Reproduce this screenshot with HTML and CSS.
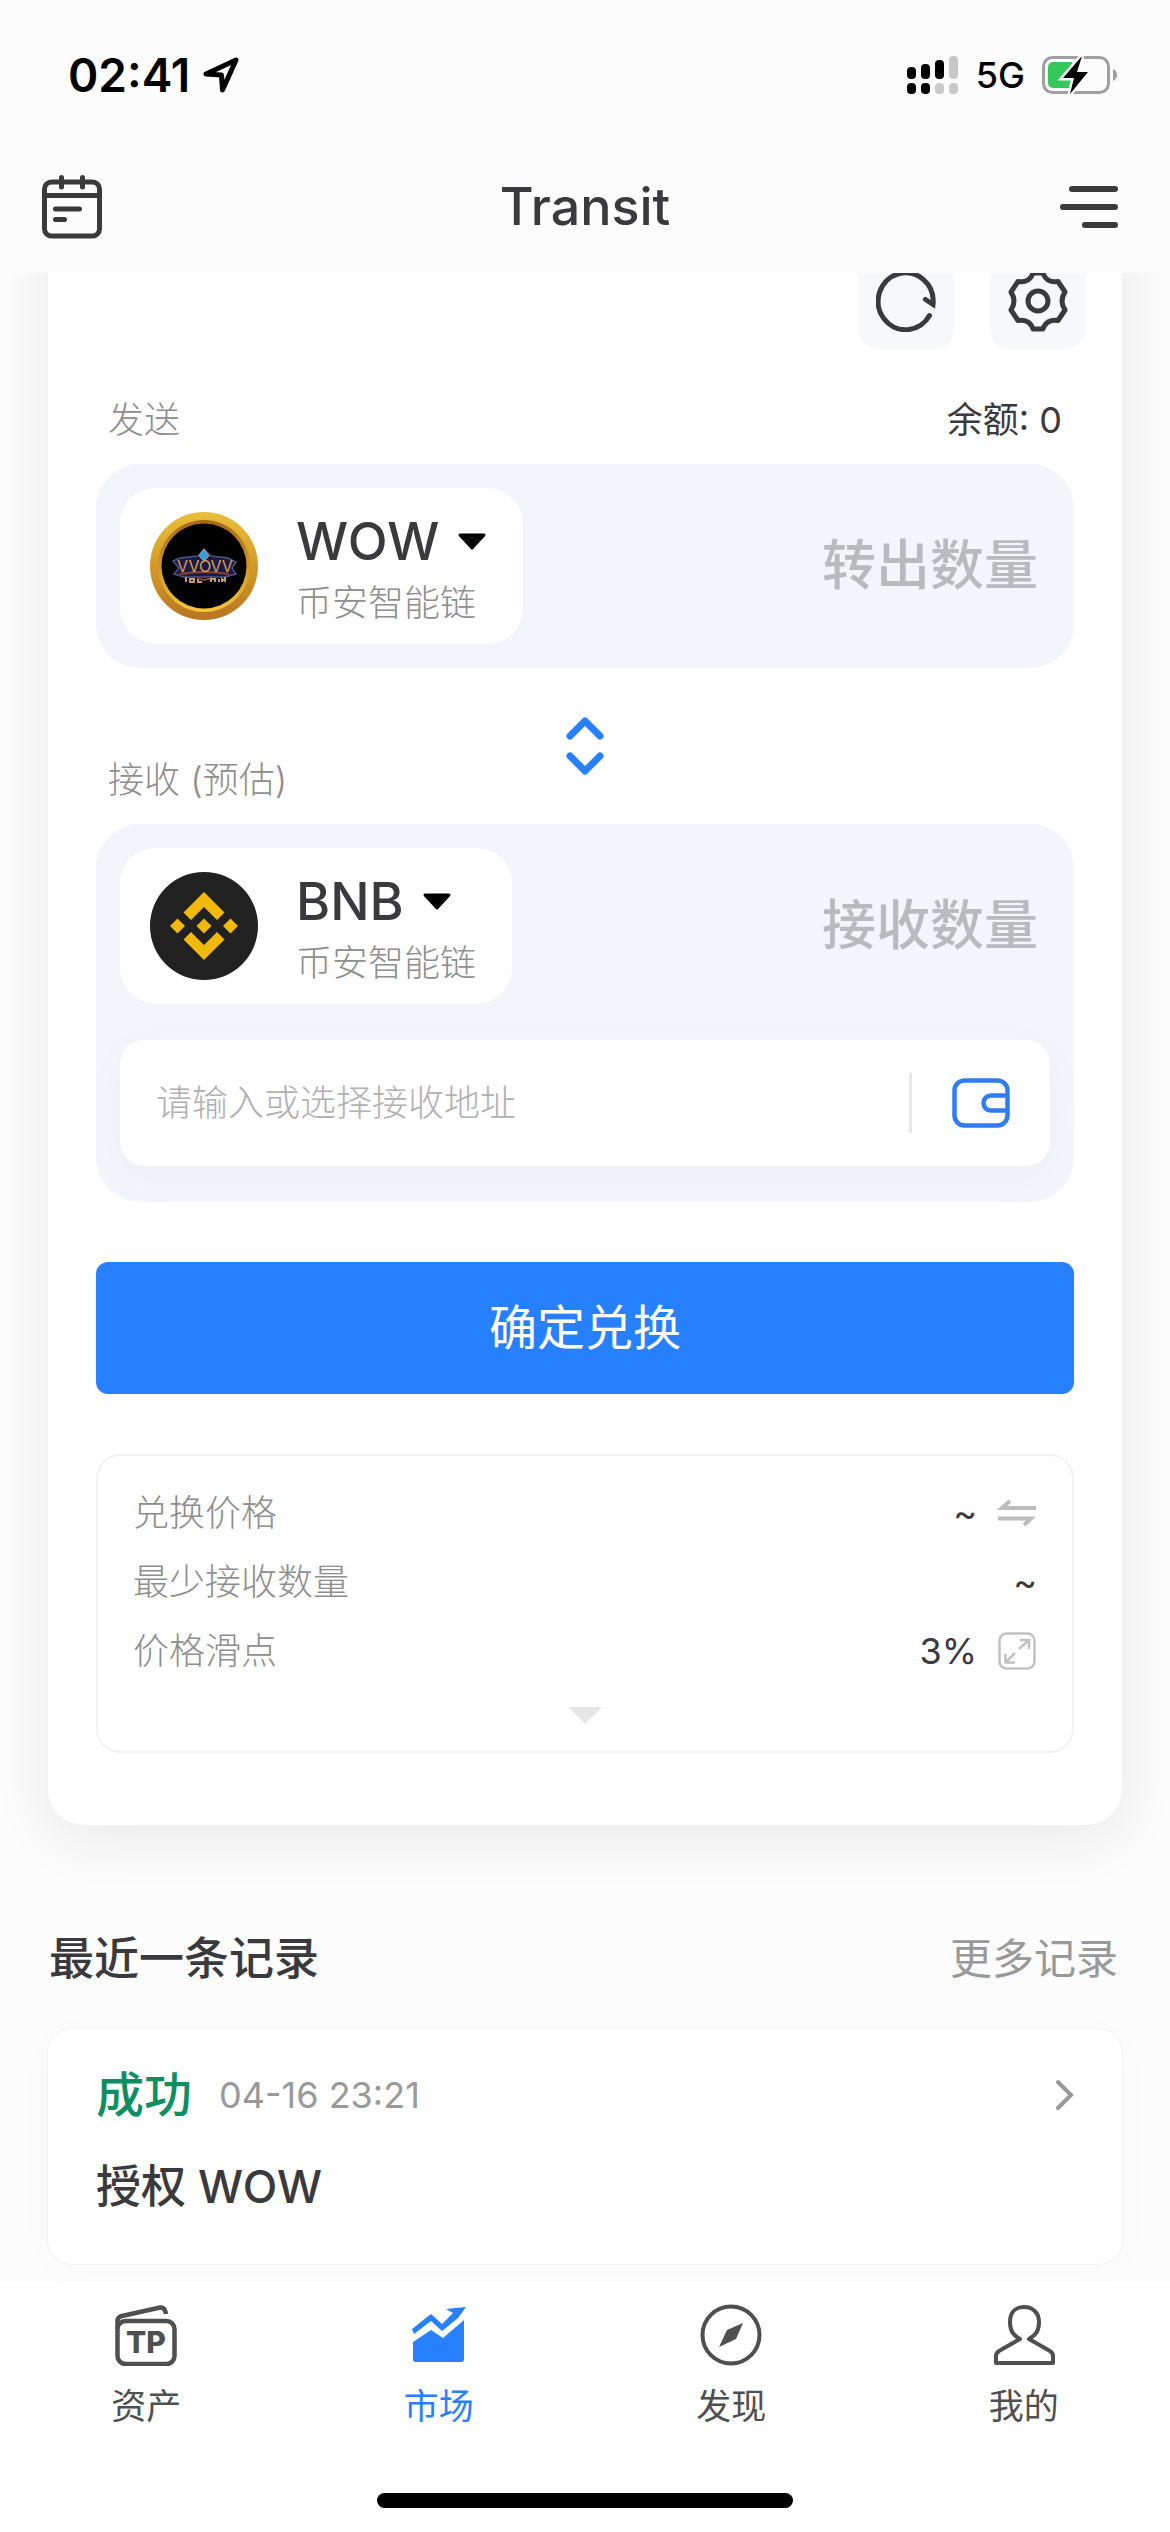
FILE: index.html
```html
<!DOCTYPE html>
<html lang="zh-CN">
<head>
    <meta charset="UTF-8">
    <meta name="viewport" content="width=device-width, initial-scale=1.0">
    <title>Transit</title>
    <link rel="stylesheet" href="styles.css">
</head>
<body>

    <div class="status-bar">
        <div class="status-left">
            <span class="time">02:41</span>
            <svg width="38" height="38" viewBox="0 0 38 38" fill="none" stroke="#000" stroke-width="5" stroke-linejoin="round">
                <path d="M34 4 L4 18 L19.500 19 L20.500 34 Z"/>
            </svg>
        </div>
        <div class="status-right">
            <svg width="52" height="38" viewBox="0 0 52 38">
                <g fill="#000">
                    <rect x="0" y="11" width="9" height="12" rx="4"/>
                    <rect x="14" y="8" width="9" height="15" rx="4"/>
                    <rect x="28" y="4" width="9" height="19" rx="4"/>
                    <rect x="0" y="27" width="9" height="11" rx="4"/>
                    <rect x="14" y="27" width="9" height="11" rx="4"/>
                </g>
                <g fill="#c8c8c8">
                    <rect x="42" y="0" width="9" height="23" rx="4"/>
                    <rect x="28" y="27" width="9" height="11" rx="4"/>
                    <rect x="42" y="27" width="9" height="11" rx="4"/>
                </g>
            </svg>
            <span class="network">5G</span>
            <svg width="76" height="40" viewBox="0 0 76 40">
                <rect x="1.500" y="2.500" width="65" height="35" rx="9" fill="none" stroke="#a0a0a0" stroke-width="3"/>
                <path d="M71 14 Q75 16 75 20 Q75 24 71 26 Z" fill="#a0a0a0"/>
                <rect x="6" y="7" width="27" height="26" rx="5" fill="#34c759"/>
                <path d="M40 1 L21 23 L32 23 L28 39 L46 17 L35 17 Z" fill="#000" stroke="#fcfcfc" stroke-width="5" paint-order="stroke"/>
            </svg>
        </div>
    </div>

    <header class="header">
        <button class="icon-btn" aria-label="记录">
            <svg width="60" height="64" viewBox="0 0 60 64" fill="none" stroke="#3a3a3a" stroke-width="5" stroke-linecap="round">
                <rect x="2.500" y="7" width="55" height="54" rx="7"/>
                <path d="M3 20.500 H57 M19.500 2.500 V12 M40.500 2.500 V12 M13.500 34 H37.500 M13.500 44.500 H22.500"/>
            </svg>
        </button>
        <h1>Transit</h1>
        <button class="icon-btn" aria-label="菜单">
            <svg width="60" height="44" viewBox="0 0 60 44" fill="none" stroke="#3a3a3a" stroke-width="6" stroke-linecap="round">
                <path d="M12 4 H55 M3 22 H55 M25 40 H55"/>
            </svg>
        </button>
    </header>

    <main class="content">
        <section class="panel">
            <div class="tools">
                <button class="tool" aria-label="刷新">
                    <svg width="60" height="62" viewBox="0 0 60 62" fill="none" stroke="#3a3a3c" stroke-width="5" stroke-linecap="round">
                        <path d="M53.500 45.500 A27.500 28.500 0 1 1 57 34.500 L49.500 29.500"/>
                    </svg>
                </button>
                <button class="tool" aria-label="设置">
                    <svg width="60" height="62" viewBox="0 0 60 62" fill="none" stroke="#3a3a3c" stroke-width="5" stroke-linejoin="round">
                        <path d="M25 3 H35 C37 9 42 13 50 11.500 L57 22 C53 28 53 34 57 40 L50 50.500 C42 49 37 53 35 59 H25 C23 53 18 49 10 50.500 L3 40 C7 34 7 28 3 22 L10 11.500 C18 13 23 9 25 3 Z"/>
                        <circle cx="30" cy="31" r="10"/>
                    </svg>
                </button>
            </div>

            <div class="field-head">
                <label for="sendAmount">发送</label>
                <span class="balance">余额: 0</span>
            </div>
            <div class="box">
                <div class="token-row">
                    <button class="token">
                        <svg class="coin" width="108" height="108" viewBox="0 0 108 108">
                            <defs>
                                <linearGradient id="gold" x1="0" y1="0" x2="0" y2="1">
                                    <stop offset="0" stop-color="#eabf3a"/>
                                    <stop offset="0.5" stop-color="#d39b28"/>
                                    <stop offset="1" stop-color="#b97423"/>
                                </linearGradient>
                                <linearGradient id="rim" x1="0" y1="0" x2="0" y2="1">
                                    <stop offset="0" stop-color="#a8671a"/>
                                    <stop offset="1" stop-color="#f4c53c"/>
                                </linearGradient>
                            </defs>
                            <circle cx="54" cy="54" r="54" fill="url(#gold)"/>
                            <circle cx="54" cy="54" r="46" fill="url(#rim)"/>
                            <circle cx="54" cy="54" r="42.500" fill="#000"/>
                            <path d="M23 49 L30 46 L48 44 L54 37 L61 44 L78 46 L86 50 L82 56 L86 62 L75 65 H34 L24 62 L29 56 Z" fill="#1c1b42" stroke="#4b5685" stroke-width="1.500"/>
                            <path d="M30 62 Q54 58 79 62 M47 65 Q54 71 62 65" fill="none" stroke="#8a4430" stroke-width="2"/>
                            <path d="M54 37 L59 44 L54 49 L49 44 Z" fill="#2e9ee8" stroke="#c99461" stroke-width="1"/>
                            <text x="55" y="60" text-anchor="middle" font-size="16" fill="#d99c5e">VVOVV</text>
                            <path d="M36 65 V70 M40 67 H44 V70 H40 Z M48 67 V70 H52 M61 70 V67 H65 V70 M69 67 V70 M72 70 V67 L75 69 V65" fill="none" stroke="#c49a6a" stroke-width="2"/>
                        </svg>
                        <span class="token-text">
                            <span class="token-name">WOW
                                <svg width="30" height="18" viewBox="0 0 30 18"><path d="M3 2 H27 L15 15 Z" fill="#000" stroke="#000" stroke-width="3" stroke-linejoin="round"/></svg>
                            </span>
                            <span class="token-chain">币安智能链</span>
                        </span>
                    </button>
                    <input class="amount" type="text" id="sendAmount" placeholder="转出数量">
                </div>
            </div>

            <div class="field-head swap-head">
                <label for="receiveAmount">接收 (预估)</label>
                <button class="swap" aria-label="切换">
                    <svg width="38" height="58" viewBox="0 0 38 58" fill="none" stroke="#2780fe" stroke-width="7" stroke-linecap="round" stroke-linejoin="round">
                        <path d="M4 19 L19 4 L34 19 M4 39 L19 54 L34 39"/>
                    </svg>
                </button>
            </div>
            <div class="box">
                <div class="token-row">
                    <button class="token">
                        <svg class="coin" width="108" height="108" viewBox="0 0 108 108">
                            <circle cx="54" cy="54" r="54" fill="#212121"/>
                            <g fill="#f0b90b">
                                <path d="M54 20 L74.500 40.500 L67 48 L54 35 L41 48 L33.500 40.500 Z"/>
                                <path d="M54 88 L74.500 67.500 L67 60 L54 73 L41 60 L33.500 67.500 Z"/>
                                <path d="M54 46.500 L61.500 54 L54 61.500 L46.500 54 Z"/>
                                <path d="M27.500 46.500 L35 54 L27.500 61.500 L20 54 Z"/>
                                <path d="M80.500 46.500 L88 54 L80.500 61.500 L73 54 Z"/>
                            </g>
                        </svg>
                        <span class="token-text">
                            <span class="token-name">BNB
                                <svg width="30" height="18" viewBox="0 0 30 18"><path d="M3 2 H27 L15 15 Z" fill="#000" stroke="#000" stroke-width="3" stroke-linejoin="round"/></svg>
                            </span>
                            <span class="token-chain">币安智能链</span>
                        </span>
                    </button>
                    <input class="amount" type="text" id="receiveAmount" placeholder="接收数量">
                </div>
                <div class="address">
                    <input type="text" id="address" aria-label="接收地址" placeholder="请输入或选择接收地址">
                    <button class="wallet" aria-label="选择钱包">
                        <svg width="58" height="50" viewBox="0 0 58 50" fill="none" stroke="#2f7df0" stroke-width="4.500">
                            <rect x="2.500" y="2.500" width="53" height="45" rx="10"/>
                            <path d="M55 17.500 H39 A7.500 7.500 0 0 0 39 32.500 H55"/>
                        </svg>
                    </button>
                </div>
            </div>

            <button class="confirm">确定兑换</button>

            <div class="details">
                <dl>
                    <div class="row">
                        <dt>兑换价格</dt>
                        <dd>~
                            <svg width="40" height="28" viewBox="0 0 40 28" fill="none" stroke="#bcbcbc" stroke-width="4">
                                <path d="M39 9 H5 L13 2 M1 19.500 H34 L27 26"/>
                            </svg>
                        </dd>
                    </div>
                    <div class="row">
                        <dt>最少接收数量</dt>
                        <dd>~</dd>
                    </div>
                    <div class="row">
                        <dt>价格滑点</dt>
                        <dd>3%
                            <svg width="40" height="38" viewBox="0 0 40 38" fill="none" stroke="#c2c2c2" stroke-width="2.500">
                                <rect x="2.500" y="1.500" width="35" height="35" rx="7"/>
                                <path d="M22 17 L32 8 M23 8 H32 V17 M18 21 L8.500 30.500 M8.500 22 V30.500 H18"/>
                            </svg>
                        </dd>
                    </div>
                </dl>
                <button class="expand" aria-label="展开">
                    <svg width="34" height="17" viewBox="0 0 34 17"><path d="M0 0 H34 L17 17 Z" fill="#e6e6e6"/></svg>
                </button>
            </div>
        </section>

        <section class="records">
            <div class="records-head">
                <h2>最近一条记录</h2>
                <a href="#">更多记录</a>
            </div>
            <a class="record" href="#">
                <span class="record-top">
                    <span class="state">成功</span>
                    <span class="date">04-16 23:21</span>
                    <svg width="20" height="32" viewBox="0 0 20 32" fill="none" stroke="#999" stroke-width="4" stroke-linecap="round">
                        <path d="M4 3 L17 16 L4 29"/>
                    </svg>
                </span>
                <span class="record-name">授权 WOW</span>
            </a>
        </section>
    </main>

    <nav class="tab-bar">
        <div class="tabs">
            <a href="#">
                <svg width="62" height="62" viewBox="0 0 62 62" fill="none" stroke="#4f4f4f" stroke-width="4.500">
                    <rect x="2.500" y="17" width="57" height="43" rx="8"/>
                    <path d="M2.500 25 V16 Q3 13 7 12 L45 3.500 Q50 3 51 10"/>
                    <text x="31" y="49" text-anchor="middle" font-size="30" font-weight="800" fill="#4f4f4f" stroke="none">TP</text>
                </svg>
                资产
            </a>
            <a href="#" class="active">
                <svg width="62" height="62" viewBox="0 0 62 62" fill="#2780fe">
                    <path d="M5 38 L23 26 L35 34 L56 16 V55 Q56 58 53 58 H8 Q5 58 5 55 Z"/>
                    <path d="M4 25 L23 10 L34 20 L45 9 L38 5 L58 3 L50 14 L34 27 L23 17 L6 30 Z"/>
                </svg>
                市场
            </a>
            <a href="#">
                <svg width="62" height="62" viewBox="0 0 62 62" fill="none" stroke="#4f4f4f" stroke-width="4">
                    <circle cx="31" cy="31" r="28.500"/>
                    <path d="M43 19 L36 35 L19 43 L27 26 Z" fill="#4f4f4f" stroke="none"/>
                </svg>
                发现
            </a>
            <a href="#">
                <svg width="62" height="62" viewBox="0 0 62 62" fill="none" stroke="#4f4f4f" stroke-width="4" stroke-linejoin="round">
                    <path d="M27 35 C20 31 17 27 17 18 C17 8 23 3 31 3 C39 3 46 8 46 18 C46 27 43 31 36 35 L57 47 Q60 49 60 52 V59 H3 V52 Q3 49 6 47 Z"/>
                </svg>
                我的
            </a>
        </div>
        <div class="home-indicator"></div>
    </nav>

</body>
</html>
```

FILE: styles.css
```css
* {
    box-sizing: border-box;
}
body {
    margin: 0;
    min-height: 100vh;
    display: flex;
    flex-direction: column;
    background-color: #fcfcfc;
    color: #3a3a3c;
    font-family: Inter, "Noto Sans CJK SC", sans-serif;
    font-size: 36px;
    line-height: 52px;
}
button, input {
    font: inherit;
    color: inherit;
    border: none;
    background: none;
    padding: 0;
    margin: 0;
}
button {
    cursor: pointer;
}
input {
    outline: none;
    min-width: 0;
}
a {
    color: inherit;
    text-decoration: none;
}
svg {
    display: block;
    flex: none;
}

/* status bar */
.status-bar {
    height: 149px;
    padding: 0 52px 0 68px;
    display: flex;
    align-items: center;
    justify-content: space-between;
    color: #000;
}
.status-left, .status-right {
    display: flex;
    align-items: center;
}
.status-left {
    gap: 12px;
}
.status-right {
    gap: 17px;
}
.time {
    font-size: 46px;
    font-weight: 600;
}
.network {
    font-size: 36px;
    font-weight: 500;
}

/* header */
.header {
    height: 124px;
    padding: 0 42px 8px;
    display: flex;
    align-items: center;
    justify-content: space-between;
}
.header h1 {
    margin: 0;
    font-size: 52px;
    font-weight: 500;
}
.icon-btn {
    width: 68px;
}

/* scrolled content */
.content {
    flex: 1;
    overflow: hidden;
    padding: 0 48px;
}
.panel {
    margin-top: -68px;
    padding: 48px 36px 72px;
    background-color: #fff;
    border-radius: 36px;
    box-shadow: 0 12px 60px rgba(0, 0, 0, 0.08);
}
.tools {
    display: flex;
    justify-content: flex-end;
    gap: 36px;
    margin-bottom: 45px;
}
.tool {
    width: 96px;
    height: 96px;
    display: flex;
    align-items: center;
    justify-content: center;
    background-color: #f7f8fa;
    border-radius: 20px;
}
.field-head {
    display: flex;
    justify-content: space-between;
    padding: 0 24px 18px;
}
.field-head label {
    color: #8e8e8e;
    font-weight: 300;
}
.swap-head {
    display: grid;
    grid-template-columns: 1fr auto 1fr;
    height: 156px;
    padding: 0 24px;
}
.swap-head label {
    align-self: end;
    margin-bottom: 18px;
}
.swap {
    align-self: center;
}
.box {
    margin: 0 12px;
    padding: 24px;
    background-color: #f4f5fb;
    border-radius: 44px;
}
.token-row {
    display: flex;
    align-items: center;
}
.token {
    display: flex;
    align-items: center;
    gap: 38px;
    height: 156px;
    padding: 0 36px 0 30px;
    background-color: #fff;
    border-radius: 36px;
    text-align: left;
}
.token-text {
    display: flex;
    flex-direction: column;
    gap: 3px;
    padding-top: 6px;
}
.token-name {
    display: flex;
    align-items: center;
    gap: 18px;
    font-size: 52px;
    line-height: 64px;
    font-weight: 500;
}
.token-chain {
    color: #8e8e8e;
    font-weight: 300;
}
.amount {
    flex: 1;
    padding-right: 12px;
    font-size: 54px;
    font-weight: 500;
    line-height: 80px;
    text-align: right;
}
.amount::placeholder {
    color: #b9babd;
    opacity: 1;
}
.address {
    display: flex;
    align-items: center;
    height: 126px;
    margin: 36px 0 12px;
    padding: 0 0 0 36px;
    background-color: #fff;
    border-radius: 24px;
    box-shadow: 0 12px 48px rgba(0, 0, 0, 0.03);
}
.address input {
    flex: 1;
    font-weight: 300;
}
.address input::placeholder {
    color: #b0b0b2;
    opacity: 1;
}
.wallet {
    height: 60px;
    display: flex;
    align-items: center;
    padding: 0 40px;
    border-left: 3px solid #e8e8e8;
}
.confirm {
    display: block;
    width: calc(100% - 24px);
    height: 132px;
    margin: 60px 12px;
    background-color: #2780fe;
    border-radius: 12px;
    color: #fff;
    font-size: 48px;
}
.details {
    margin: 0 12px;
    padding: 22px 35px 6px;
    border: 2px solid #f2f2f2;
    border-radius: 24px;
}
.details dl {
    margin: 0;
}
.row {
    display: flex;
    align-items: center;
    justify-content: space-between;
    height: 69px;
}
.row dt {
    color: #8e8e8e;
    font-weight: 300;
}
.row dd {
    margin: 0;
    display: flex;
    align-items: center;
    gap: 20px;
}
.expand {
    display: flex;
    align-items: center;
    justify-content: center;
    width: 100%;
    height: 60px;
}

/* records */
.records-head {
    display: flex;
    justify-content: space-between;
    padding: 100px 4px 36px 1px;
    line-height: 68px;
}
.records-head h2 {
    margin: 0;
    font-size: 45px;
    font-weight: 500;
}
.records-head a {
    color: #999;
    font-size: 42px;
}
.record {
    display: flex;
    flex-direction: column;
    gap: 24px;
    padding: 32px 48px 43px;
    background-color: #fff;
    border-radius: 24px;
    box-shadow: 0 0 3px rgba(0, 0, 0, 0.08), 0 6px 48px rgba(0, 0, 0, 0.02);
    line-height: 68px;
}
.record-top {
    display: flex;
    align-items: center;
    gap: 27px;
}
.state {
    color: #0f8e62;
    font-size: 48px;
    font-weight: 500;
}
.date {
    flex: 1;
    color: #999;
}
.record-name {
    font-size: 45px;
    font-weight: 500;
}

/* bottom tabs */
.tab-bar {
    background-color: #fff;
    padding: 22px 0 24px;
}
.tabs {
    display: grid;
    grid-template-columns: repeat(4, 1fr);
    margin-bottom: 61px;
}
.tabs a {
    display: flex;
    flex-direction: column;
    align-items: center;
    gap: 14px;
    color: #4f4f4f;
    font-size: 35px;
}
.tabs .active {
    color: #2780fe;
}
.home-indicator {
    width: 416px;
    height: 15px;
    margin: 0 auto;
    background-color: #000;
    border-radius: 8px;
}
```
